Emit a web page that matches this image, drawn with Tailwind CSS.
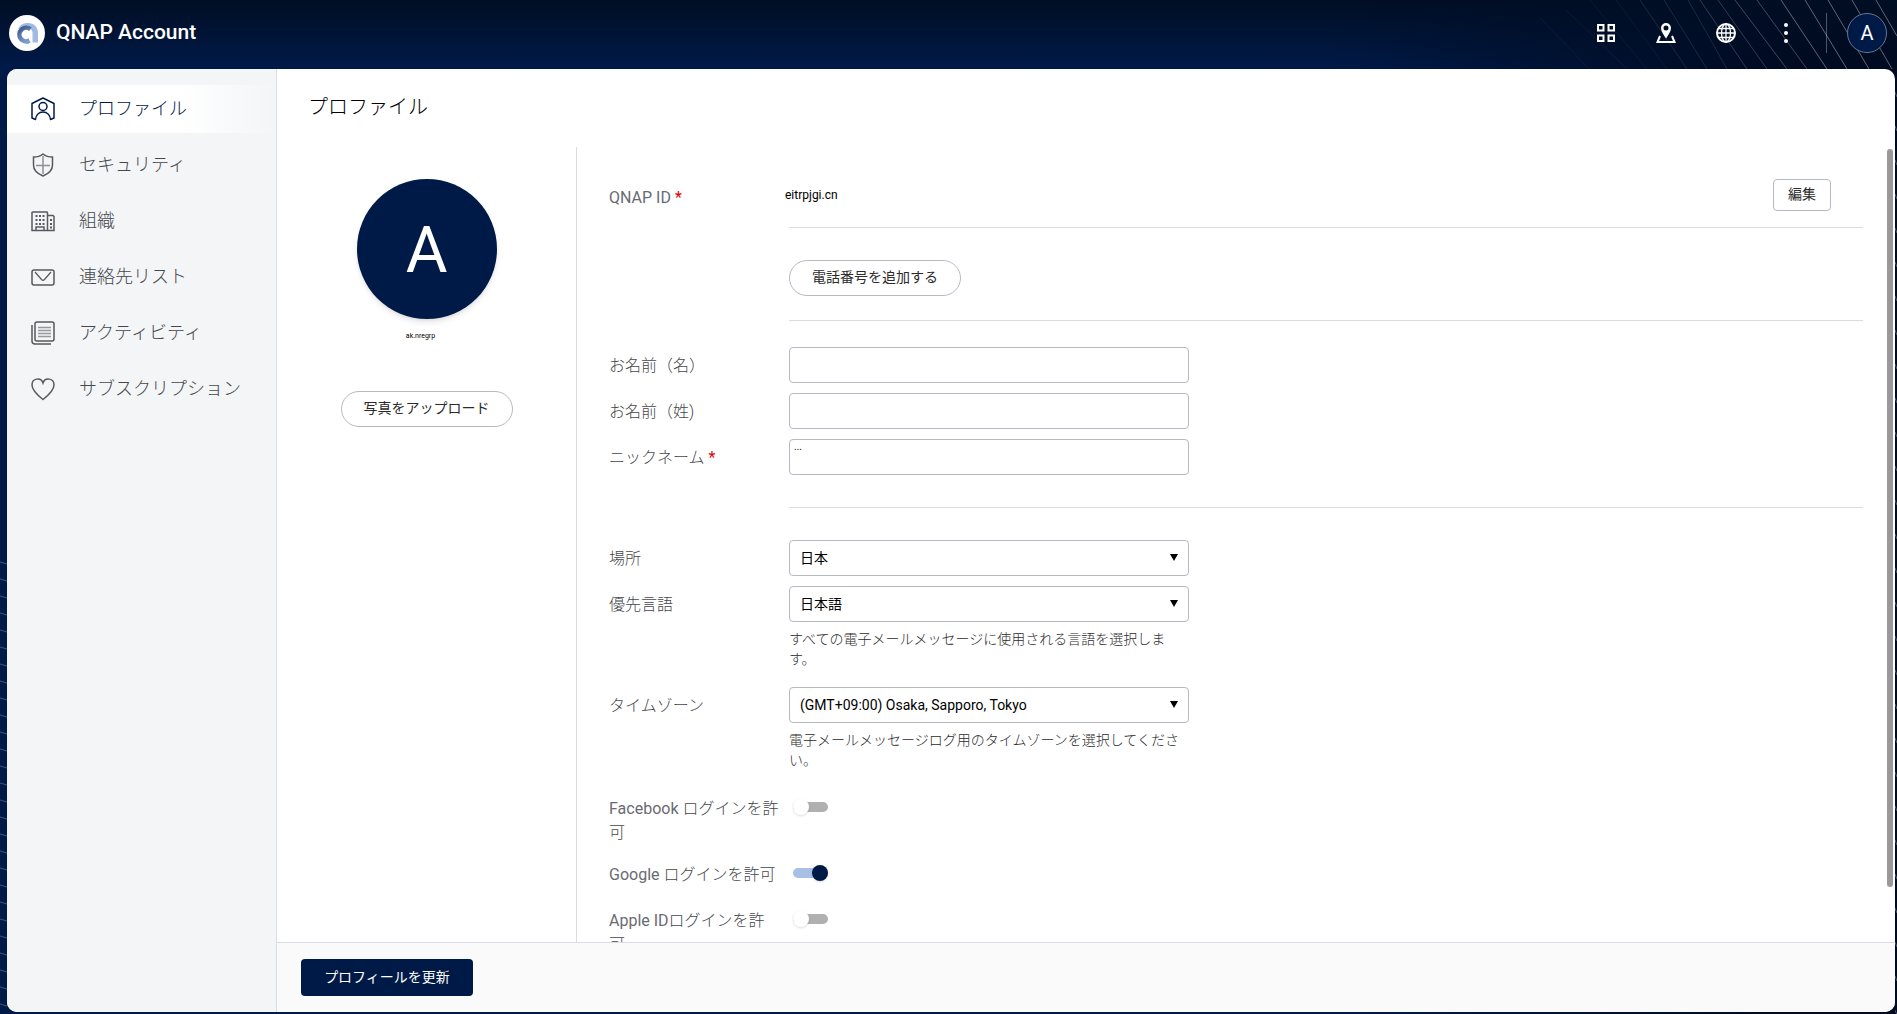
<!DOCTYPE html>
<html lang="ja">
<head>
<meta charset="utf-8">
<title>QNAP Account</title>
<script src="https://cdn.jsdelivr.net/npm/@tailwindcss/browser@4"></script>
</head>
<body class="relative isolate flex h-screen flex-col overflow-hidden bg-[#001a48] font-['Roboto','Noto_Sans_CJK_JP',sans-serif] text-[#45474c]">

<!-- Page backdrop -->
<div class="absolute inset-0 -z-10 bg-linear-to-r from-transparent from-70% to-[#000a20] to-95%"></div>
<div class="absolute inset-x-0 top-0 -z-10 h-17 bg-linear-to-b from-[#000e24] to-transparent"></div>
<svg class="absolute top-0 right-0 -z-10" width="357" height="160" viewBox="0 0 357 160" fill="none" stroke="#9aa5b8">
  <path stroke-opacity=".08" d="M0 18L49 69M26 10L87 69M50 0L107 69M76 0L127 69"/>
  <path stroke-opacity=".18" d="M100 0L147 69M124 0L167 69M148 0L187 69"/>
  <path stroke-opacity=".3" d="M160 0L207 69M178 0L227 69"/>
  <path stroke-opacity=".4" d="M195 0L247 69M217 0L267 69"/>
  <path stroke-opacity=".6" d="M241 0L287 69M265 0L307 69M288 0L329 69M312 0L352 69M336 0L357 36"/>
</svg>
<svg class="absolute bottom-0 left-0 -z-10" width="7" height="460" fill="none">
  <defs>
    <pattern id="waves" width="7" height="17" patternUnits="userSpaceOnUse"><path d="M0 8L7 10" stroke="#9aa5b8" stroke-opacity=".4"/></pattern>
  </defs>
  <rect width="7" height="460" fill="url(#waves)"/>
</svg>
<svg class="absolute right-0 bottom-0 -z-10 h-[930px]" width="2" fill="none">
  <defs>
    <pattern id="ticks" width="2" height="34" patternUnits="userSpaceOnUse"><path d="M0 8L2 13" stroke="#9aa5b8" stroke-opacity=".5"/></pattern>
  </defs>
  <rect width="2" height="930" fill="url(#ticks)"/>
</svg>

<header class="flex h-[69px] shrink-0 items-center pr-[10px] pb-[3px] pl-[9px] text-white">
  <a href="#" class="flex items-center gap-[11px]">
    <svg width="36" height="36" viewBox="0 0 36 36" fill="none">
      <defs>
        <linearGradient id="ring" x1="0" y1="0" x2=".6" y2="1"><stop offset="0" stop-color="#3f5a8c"/><stop offset="1" stop-color="#7b9cce"/></linearGradient>
      </defs>
      <circle cx="18" cy="18" r="18" fill="#fff"/>
      <path d="M9 14C11 9.500 15 8 19 8c6 0 10 4 10 10v9.500h-5.500V18c0-3.500-2.500-5.500-5.500-5.500z" fill="#a0bbe2"/>
      <path d="M21.500 14.300A6.800 6.800 0 1 0 20.500 25.500" stroke="url(#ring)" stroke-width="4.500"/>
      <path d="M20 23v5.500c-2 .5-3 0-4-.5z" fill="#7b9cce"/>
    </svg>
    <span class="text-[21px] font-medium">QNAP Account</span>
  </a>
  <nav class="ml-auto flex items-center gap-10">
    <button aria-label="アプリ"><svg class="block" width="20" height="20" fill="none" stroke="#fff" stroke-width="2"><path d="M2 2h5.500v5.500H2zM12.500 2H18v5.500h-5.500zM2 12.500h5.500V18H2zM12.500 12.500H18V18h-5.500z"/></svg></button>
    <button aria-label="地域"><svg class="block" width="20" height="20" fill="none" stroke="#fff" stroke-width="2"><path fill="#fff" fill-rule="evenodd" stroke="none" d="M10 15.500C8 12 5 8.500 5 5a5 5 0 0 1 10 0c0 3.500-3 7-5 10.500zM10 2.500a2.500 2.500 0 1 0 0 5 2.500 2.500 0 0 0 0-5z"/><path d="M4 13L1.500 19h17L16 13"/></svg></button>
    <button aria-label="言語"><svg class="block" width="20" height="20" fill="none" stroke="#fff" stroke-width="1.300"><circle cx="10" cy="10" r="9" stroke-width="2"/><ellipse cx="10" cy="10" rx="4.500" ry="9"/><path d="M10 1v18M1 10h18M2.500 5.500h15M2.500 14.500h15"/></svg></button>
    <button aria-label="メニュー"><svg class="block" width="20" height="20" fill="#fff"><circle cx="10" cy="2" r="2"/><circle cx="10" cy="10" r="2"/><circle cx="10" cy="18" r="2"/></svg></button>
  </nav>
  <div class="mr-5 ml-[30px] h-10 w-px bg-white/30"></div>
  <button class="size-10 rounded-full border border-[#667590] bg-[#001a48] text-xl">A</button>
</header>

<div class="mr-[2px] mb-[2px] ml-[7px] flex min-h-0 flex-1 overflow-hidden rounded-[10px] bg-white">
  <aside class="w-[270px] shrink-0 border-r border-[#d9dbe6] bg-[#f3f5f7] pt-4">
    <nav class="flex flex-col gap-2 text-lg font-light">
      <a href="#" class="flex h-12 items-center gap-6 bg-linear-to-r from-white from-65% to-transparent pl-6 text-[#001a48]">
        <svg width="24" height="24" fill="none" stroke="currentColor" stroke-width="1.500" stroke-linejoin="round"><path d="M4.500 22.500L1 21V6.500L12 1l11 5.500V21l-3.500 1.500C19 18 16 15 12 15S5 18 4.500 22.500z"/><circle cx="12" cy="9.500" r="4"/></svg>
        プロファイル</a>
      <a href="#" class="flex h-12 items-center gap-6 pl-6">
        <svg width="24" height="24" fill="none" stroke="#57595e" stroke-width="1.500"><path d="M12 1C9.500 3 6 4 2.500 4v8c0 5 3.500 8.500 9.500 11 6-2.500 9.500-6 9.500-11V4C18 4 14.500 3 12 1z"/><path stroke-opacity=".65" d="M12 3v18M5 12.500h14"/></svg>
        セキュリティ</a>
      <a href="#" class="flex h-12 items-center gap-6 pl-6">
        <svg width="24" height="24" fill="none" stroke="#57595e" stroke-width="1.500"><path d="M1 21.500v-18L2 3h14l.5 1v17.500zM16.500 6.500H22l1 1v14h-6.500M5 21.500V18h8v3.500"/><path stroke-width="1.800" stroke-dasharray="2 1.500" d="M4.500 7h9M4.500 11h9M4.500 15h9M19 11h2M19 15h2M19 18.500h2"/></svg>
        組織</a>
      <a href="#" class="flex h-12 items-center gap-6 pl-6">
        <svg width="24" height="24" fill="none" stroke="#57595e" stroke-width="1.500"><rect x="1" y="5" width="22" height="15" rx="2"/><path stroke-width="1.200" d="M4 7l6.500 7.500q1.500 1.500 3 0L20 7"/></svg>
        連絡先リスト</a>
      <a href="#" class="flex h-12 items-center gap-6 pl-6">
        <svg width="24" height="24" fill="none" stroke="#57595e" stroke-width="1.500"><rect x="4" y="1" width="19" height="19" rx="2"/><path d="M1 4v16q0 3 3 3h16"/><path stroke-opacity=".6" d="M7 6.500h13M7 9.500h13M7 12.500h13M7 15.500h13"/></svg>
        アクティビティ</a>
      <a href="#" class="flex h-12 items-center gap-6 pl-6">
        <svg width="24" height="24" fill="none" stroke="#57595e" stroke-width="1.500"><path d="M12 22.500C5 17 1 13 1 8c0-7 9-8 11-2 2-6 11-5 11 2 0 5-4 9-11 14.500z"/></svg>
        サブスクリプション</a>
    </nav>
  </aside>

  <main class="relative flex min-w-0 flex-1 flex-col">
    <h1 class="h-[78px] shrink-0 pt-6 pl-[31px] text-xl font-light text-black">プロファイル</h1>

    <div class="flex min-h-0 flex-1">
      <section class="flex w-[300px] shrink-0 flex-col items-center border-r border-[#d9dbe0] pt-8">
        <div class="flex size-[140px] items-center justify-center rounded-full bg-[#001a48] pt-1 text-[64px] text-white shadow-md">A</div>
        <p class="mt-3 mr-3 h-[60px] text-[7px] text-black">ak.nregrp</p>
        <button class="h-9 w-[172px] rounded-full border border-[#b7b9c4] pb-[2px] text-sm text-[#2b2b2b]">写真をアップロード</button>
      </section>

      <form id="profile" class="min-w-0 flex-1 overflow-y-auto pt-8 pr-8 pl-8 text-base [scrollbar-width:none]">
        <div class="flex">
          <span class="w-44 shrink-0 pt-[7px] text-[#696b72]">QNAP ID <span class="text-[#e60000]">*</span></span>
          <span class="w-1 shrink-0 overflow-visible pt-1 text-xs leading-6 whitespace-nowrap text-black">eitrpjgi.cn</span>
          <div class="flex h-[49px] flex-1 items-start justify-end border-b border-[#dcdcdf] pr-8">
            <button type="button" class="h-8 w-[58px] rounded border border-[#b7b9c4] pb-[2px] text-sm text-[#2b2b2b]">編集</button>
          </div>
        </div>
        <div class="ml-[180px] border-b border-[#dcdcdf] pt-8 pb-6">
          <button type="button" class="block h-9 w-[172px] rounded-full border border-[#b7b9c4] pb-[2px] text-sm text-[#2b2b2b]">電話番号を追加する</button>
        </div>

        <div class="flex flex-col gap-[10px] pt-[26px]">
          <div class="flex">
            <label for="first" class="w-[180px] shrink-0 pt-[7px] font-light">お名前（名）</label>
            <input id="first" class="h-9 w-[400px] rounded border border-[#b7b9c4] px-[10px] text-sm">
          </div>
          <div class="flex">
            <label for="last" class="w-[180px] shrink-0 pt-[7px] font-light">お名前（姓)</label>
            <input id="last" class="h-9 w-[400px] rounded border border-[#b7b9c4] px-[10px] text-sm">
          </div>
          <div class="flex">
            <label for="nick" class="w-[180px] shrink-0 pt-[7px] font-light">ニックネーム <span class="font-normal text-[#e60000]">*</span></label>
            <input id="nick" value="..." class="h-9 w-[400px] rounded border border-[#b7b9c4] px-1 pb-[22px] text-[10px] leading-none text-black">
          </div>
        </div>
        <div class="mt-8 ml-[180px] border-b border-[#dcdcdf]"></div>

        <div class="flex flex-col pt-8">
          <div class="mb-[10px] flex">
            <label for="country" class="w-[180px] shrink-0 pt-[7px] font-light">場所</label>
            <div class="relative w-[400px]">
              <select id="country" class="block h-9 w-full appearance-none rounded border border-[#b7b9c4] px-[10px] text-sm text-black"><option>日本</option></select>
              <svg class="pointer-events-none absolute top-[14px] right-[11px]" width="8" height="7"><path d="M0 0h8L4 7z"/></svg>
            </div>
          </div>
          <div class="mb-[18px] flex">
            <label for="lang" class="w-[180px] shrink-0 pt-[7px] font-light">優先言語</label>
            <div class="relative w-[400px]">
              <select id="lang" class="block h-9 w-full appearance-none rounded border border-[#b7b9c4] px-[10px] text-sm text-black"><option>日本語</option></select>
              <svg class="pointer-events-none absolute top-[14px] right-[11px]" width="8" height="7"><path d="M0 0h8L4 7z"/></svg>
              <p class="mt-[7px] text-sm/5 font-light text-[#2b2b2b]">すべての電子メールメッセージに使用される言語を選択します。</p>
            </div>
          </div>
          <div class="mb-5 flex">
            <label for="zone" class="w-[180px] shrink-0 pt-[7px] font-light">タイムゾーン</label>
            <div class="relative w-[400px]">
              <select id="zone" class="block h-9 w-full appearance-none rounded border border-[#b7b9c4] px-[10px] text-sm text-black"><option>(GMT+09:00) Osaka, Sapporo, Tokyo</option></select>
              <svg class="pointer-events-none absolute top-[14px] right-[11px]" width="8" height="7"><path d="M0 0h8L4 7z"/></svg>
              <p class="mt-[7px] text-sm/5 font-light text-[#2b2b2b]">電子メールメッセージログ用のタイムゾーンを選択してください。</p>
            </div>
          </div>
          <div class="mb-[10px] flex min-h-9">
            <label for="fb" class="mr-[10px] w-[170px] shrink-0 pt-[7px] pb-px"><span class="text-[#696b72]">Facebook </span><span class="font-light">ログインを許可</span></label>
            <input id="fb" type="checkbox" class="relative mt-3 ml-1 h-[10px] w-[35px] appearance-none rounded-full bg-[#b0b0b0] before:absolute before:-top-[3px] before:left-0 before:size-4 before:rounded-full before:bg-white before:shadow checked:bg-[#a8bfe6] checked:before:left-[19px] checked:before:bg-[#001a48]">
          </div>
          <div class="mb-[10px] flex min-h-9">
            <label for="google" class="mr-[10px] w-[170px] shrink-0 pt-[7px] pb-px"><span class="text-[#696b72]">Google </span><span class="font-light">ログインを許可</span></label>
            <input id="google" type="checkbox" checked class="relative mt-3 ml-1 h-[10px] w-[35px] appearance-none rounded-full bg-[#b0b0b0] before:absolute before:-top-[3px] before:left-0 before:size-4 before:rounded-full before:bg-white before:shadow checked:bg-[#a8bfe6] checked:before:left-[19px] checked:before:bg-[#001a48]">
          </div>
          <div class="mb-[10px] flex min-h-9">
            <label for="apple" class="mr-[10px] w-[170px] shrink-0 pt-[7px] pb-px"><span class="text-[#696b72]">Apple ID</span><span class="font-light">ログインを許可</span></label>
            <input id="apple" type="checkbox" class="relative mt-3 ml-1 h-[10px] w-[35px] appearance-none rounded-full bg-[#b0b0b0] before:absolute before:-top-[3px] before:left-0 before:size-4 before:rounded-full before:bg-white before:shadow checked:bg-[#a8bfe6] checked:before:left-[19px] checked:before:bg-[#001a48]">
          </div>
        </div>
      </form>
    </div>

    <!-- Scroll thumb -->
    <div class="absolute top-20 right-[2px] bottom-[125px] w-1.5 rounded-full bg-[#999]"></div>

    <footer class="h-[70px] shrink-0 border-t border-[#d9dbe6] bg-[#fafafa] pt-4 pl-6">
      <button form="profile" class="h-[37px] w-[172px] rounded bg-[#001a48] pb-[2px] text-sm text-white">プロフィールを更新</button>
    </footer>
  </main>
</div>
</body>
</html>
